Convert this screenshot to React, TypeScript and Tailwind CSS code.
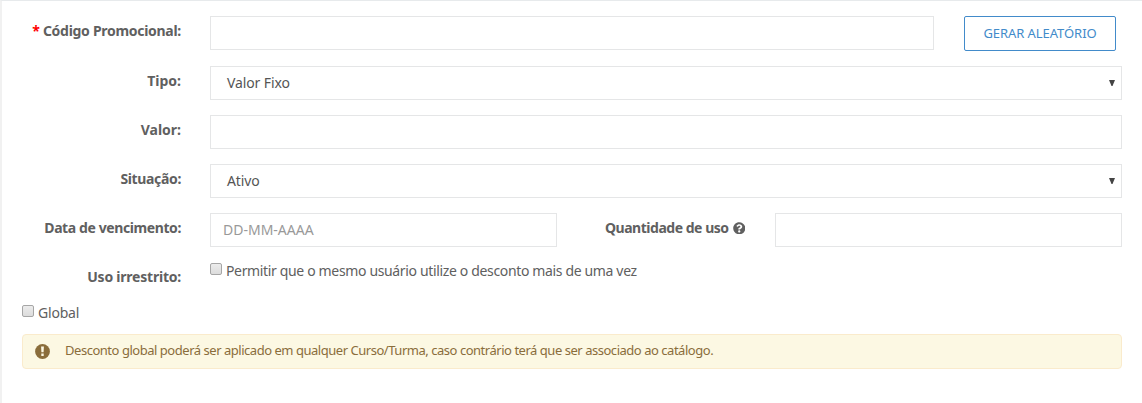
import type { ReactNode } from 'react';
import { FaQuestionCircle } from 'react-icons/fa';

const field = 'block h-[34px] rounded-none border border-[#e5e6e7] bg-white outline-none';
const box =
  'block size-3 shrink-0 appearance-none rounded-[2px] border border-[#a6a6a6] bg-linear-to-b from-[#ececec] to-[#dcdcdc]';

function Label({ children }: { children: ReactNode }) {
  return (
    <div className="mr-[29px] w-[159px] shrink-0 whitespace-nowrap text-right text-[14px] leading-[30px] font-bold">
      {children}
    </div>
  );
}

function Select({ value }: { value: string }) {
  return (
    <div className={field + ' flex flex-1 items-center justify-between pr-[6px] pl-[16px] text-[14px] text-[#555]'}>
      <span className="pb-[2px] tracking-[-0.12px]">{value}</span>
      <svg width="6" height="6" viewBox="0 0 6 6" fill="#444">
        <path d="M0 0h6L3.5 6h-1z" />
      </svg>
    </div>
  );
}

export default function App() {
  return (
    <form className="h-[403px] w-[1142px] border-t border-l-2 border-t-[#e7eaec] border-l-[#f1f1f1] bg-white pt-[15px] pr-5 pl-5 font-['Noto_Sans',sans-serif] text-[#676a6c]">
      <div className="flex h-[50px] items-start">
        <Label>
          <span className="text-[#f00]">*</span>
          <span className="ml-[3px] tracking-[-0.29px] text-[#606060]">Código Promocional:</span>
        </Label>
        <input className={field + ' w-[724px]'} />
        <button
          type="button"
          className="ml-[30px] h-[35px] w-[152px] rounded-[2px] border border-[#428bca] text-[13px] whitespace-nowrap text-[#428bca]"
        >
          <span className="tracking-[-0.06px]">GERAR ALEATÓRIO</span>
        </button>
      </div>
      <div className="flex h-[49px] items-start">
        <Label><span className="text-[#606060]">Tipo:</span></Label>
        <Select value="Valor Fixo" />
      </div>
      <div className="flex h-[49px] items-start">
        <Label><span className="text-[#606060]">Valor:</span></Label>
        <input className={field + ' flex-1'} />
      </div>
      <div className="flex h-[49px] items-start">
        <Label><span className="tracking-[-0.35px] text-[#606060]">Situação:</span></Label>
        <Select value="Ativo" />
      </div>
      <div className="flex h-[49px] items-start">
        <Label><span className="tracking-[-0.4px] text-[#606060]">Data de vencimento:</span></Label>
        <input
          placeholder="DD-MM-AAAA"
          className={field + ' w-[347px] px-3 pb-[2px] text-[14px] placeholder:text-[#999]'}
        />
        <div className="mr-[29px] ml-[48px] flex w-[141px] items-center gap-1 text-[14px] leading-[30px] font-bold whitespace-nowrap text-[#606060]">
          <span className="tracking-[-0.48px]">Quantidade de uso</span>
          <FaQuestionCircle className="size-[12.5px] shrink-0" />
        </div>
        <input className={field + ' w-[347px]'} />
      </div>
      <div className="flex h-[43px] items-start">
        <Label><span className="tracking-[-0.22px] text-[#606060]">Uso irrestrito:</span></Label>
        <label className="flex items-start gap-1 pt-px text-[14px] leading-[16px] whitespace-nowrap text-[#606060]">
          <input type="checkbox" className={box} />
          <span className="tracking-[-0.35px]">Permitir que o mesmo usuário utilize o desconto mais de uma vez</span>
        </label>
      </div>
      <label className="flex h-[29px] items-start gap-1 text-[14px] leading-[16px] text-[#606060]">
        <input type="checkbox" className={box} />
        <span className="tracking-[-0.2px]">Global</span>
      </label>
      <div className="flex h-[35px] items-center rounded-[4px] border border-[#faebcc] bg-[#fcf8e3] pl-3 text-[13px] whitespace-nowrap text-[#8a6d3b]">
        <svg className="mr-[15px] size-[15px] shrink-0" viewBox="0 0 15 15">
          <circle cx="7.5" cy="7.5" r="7.4" fill="#8a6d3b" />
          <path d="M6.1 2.6h2.8l-.3 5.6H6.4zM6.3 9.5h2.4v2.5H6.3z" fill="#fcf8e3" />
        </svg>
        <span className="pb-[2px] tracking-[-0.47px]">
          Desconto global poderá ser aplicado em qualquer Curso/Turma, caso contrário terá que ser associado ao catálogo.
        </span>
      </div>
    </form>
  );
}
